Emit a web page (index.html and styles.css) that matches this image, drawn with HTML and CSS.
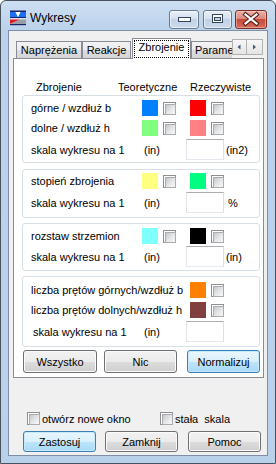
FILE: index.html
```html
<!DOCTYPE html>
<html lang="pl">
<head>
<meta charset="utf-8">
<title>Wykresy</title>
<link rel="stylesheet" href="styles.css">
</head>
<body>
<div class="window">
  <div class="titlebar">
    <svg class="appicon" viewBox="0 0 16 16" width="16" height="16">
      <path d="M0 0.5h16v1.5H0z" fill="#18236e"/>
      <path d="M0 2h5.5L8 7H0z" fill="#1c6ef2"/>
      <path d="M16 2h-5.5L8 7h8z" fill="#1c6ef2"/>
      <path d="M5.5 2h5L8 7z" fill="#ffffff"/>
      <path d="M0 7h16v1.2H0z" fill="#18236e"/>
      <path d="M0 8.2h16v1.3H0z" fill="#e8eef6"/>
      <path d="M0 9.5h10L0 14z" fill="#e41a1a"/>
      <path d="M10 9.5h6v4.5H0z" fill="#9a9ea6"/>
      <path d="M0 14h16v1.2H0z" fill="#18236e"/>
    </svg>
    <span class="title">Wykresy</span>
    <div class="tbtns">
      <span class="tbtn min"><svg width="28" height="17" viewBox="0 0 28 17"><rect x="8.5" y="6.5" width="12" height="4" fill="#fff" stroke="#364659"/></svg></span>
      <span class="tbtn max"><svg width="27" height="17" viewBox="0 0 27 17"><rect x="8.5" y="3.5" width="10" height="8" fill="#fff" stroke="#364659"/><rect x="10.5" y="6.5" width="6" height="3" fill="#c9d6e6" stroke="#364659"/></svg></span>
      <span class="tbtn close"><svg width="30" height="17" viewBox="0 0 30 17"><path d="M9.5 3.5L20.5 12.5M20.5 3.5L9.5 12.5" stroke="#5a1d18" stroke-width="4.2" stroke-linecap="square"/><path d="M9.5 3.5L20.5 12.5M20.5 3.5L9.5 12.5" stroke="#ffffff" stroke-width="2.2" stroke-linecap="square"/></svg></span>
    </div>
  </div>

  <div class="client">
    <div class="tabctl">
      <div class="tabrow">
        <div class="strip">
          <div class="tab t1">Naprężenia</div>
          <div class="tab t2">Reakcje</div>
          <div class="tab sel"><span class="focus">Zbrojenie</span></div>
          <div class="tab t4">Parametry</div>
        </div>
        <div class="spin">
          <span class="sb sbl"><svg width="13" height="14" viewBox="0 0 13 14"><path d="M7.5 4.5L4.5 7L7.5 9.5z" fill="#41597f"/></svg></span>
          <span class="sb sbr"><svg width="14" height="14" viewBox="0 0 14 14"><path d="M6 4.5L9 7L6 9.5z" fill="#41597f"/></svg></span>
        </div>
      </div>

      <div class="pane">
        <div class="hdr">
          <span class="h1">Zbrojenie</span>
          <span class="h2">Teoretyczne</span>
          <span class="h3">Rzeczywiste</span>
        </div>

        <div class="group g1">
          <div class="row">
            <span class="lbl">górne / wzdłuż b</span>
            <i class="sw c-blue"></i><i class="cb gap"></i>
            <i class="sw c-red"></i><i class="cb"></i>
          </div>
          <div class="row">
            <span class="lbl">dolne / wzdłuż h</span>
            <i class="sw c-green"></i><i class="cb gap"></i>
            <i class="sw c-pink"></i><i class="cb"></i>
          </div>
          <div class="srow mt1">
            <span class="lbl2">skala wykresu na 1</span>
            <span class="inl">(in)</span>
            <span class="inp"></span>
            <span class="u">(in2)</span>
          </div>
        </div>

        <div class="group g2">
          <div class="row">
            <span class="lbl">stopień zbrojenia</span>
            <i class="sw c-yellow"></i><i class="cb gap"></i>
            <i class="sw c-mint"></i><i class="cb"></i>
          </div>
          <div class="srow mt1">
            <span class="lbl2">skala wykresu na 1</span>
            <span class="inl">(in)</span>
            <span class="inp"></span>
            <span class="u u-pct">%</span>
          </div>
        </div>

        <div class="group g3">
          <div class="row">
            <span class="lbl">rozstaw strzemion</span>
            <i class="sw c-cyan"></i><i class="cb gap"></i>
            <i class="sw c-black"></i><i class="cb"></i>
          </div>
          <div class="srow">
            <span class="lbl2">skala wykresu na 1</span>
            <span class="inl">(in)</span>
            <span class="inp"></span>
            <span class="u">(in)</span>
          </div>
        </div>

        <div class="group g4">
          <div class="row">
            <span class="lbl wide">liczba prętów górnych/wzdłuż b</span>
            <i class="sw c-orange"></i><i class="cb"></i>
          </div>
          <div class="row">
            <span class="lbl wide">liczba prętów dolnych/wzdłuż h</span>
            <i class="sw c-brown"></i><i class="cb"></i>
          </div>
          <div class="srow mt1 ind">
            <span class="lbl2 narrow">skala wykresu na 1</span>
            <span class="inl">(in)</span>
            <span class="inp"></span>
          </div>
        </div>

        <div class="pbtns">
          <span class="btn b74">Wszystko</span>
          <span class="btn b73 ml7">Nic</span>
          <span class="btn b73 ml10 def">Normalizuj</span>
        </div>
      </div>
    </div>

    <div class="opts">
      <label class="opt opt1"><i class="cb"></i><span>otwórz nowe okno</span></label>
      <label class="opt"><i class="cb"></i><span>stała&nbsp; skala</span></label>
    </div>

    <div class="bbtns">
      <span class="btn b73 def">Zastosuj</span>
      <span class="btn b73 ml9">Zamknij</span>
      <span class="btn b73 ml10">Pomoc</span>
    </div>
  </div>
</div>
</body>
</html>
```
FILE: styles.css
```css
* { box-sizing: border-box; }
html, body { margin: 0; padding: 0; background: #ffffff; }
body {
  font-family: "Liberation Sans", Arial, sans-serif;
  font-size: 11px;
  color: #000;
}
i { font-style: normal; }

.window {
  width: 276px;
  height: 464px;
  border: 1px solid #48525e;
  border-radius: 6px 6px 0 0;
  background: linear-gradient(#cddff2, #bad2eb 30px, #b9d1ea);
  display: flex;
  flex-direction: column;
}

/* title bar */
.titlebar {
  height: 29px;
  flex: none;
  display: flex;
  align-items: flex-start;
  padding: 9px 8px 0 9px;
}
.appicon { flex: none; display: block; }
.title {
  margin-left: 4px;
  font-size: 12px;
  line-height: 16px;
  color: #000;
}
.tbtns { margin-left: auto; display: flex; }
.tbtn {
  height: 19px;
  border: 1px solid #6b7a8e;
  border-radius: 3px;
  background: linear-gradient(#e9f0f8, #d5e1ef 45%, #c2d2e6 50%, #cbdaec);
  box-shadow: inset 0 0 0 1px rgba(255,255,255,0.55);
  display: flex;
}
.tbtn svg { display: block; }
.min { width: 30px; }
.max { width: 29px; margin-left: 4px; }
.close {
  width: 32px;
  margin-left: 3px;
  border-color: #7a2c24;
  background: linear-gradient(#eab0a7, #dc8a7d 45%, #c84a3b 50%, #d36d5a);
  box-shadow: inset 0 0 0 1px rgba(255,220,210,0.45);
}

/* client area */
.client {
  flex: 1;
  margin: 0 7px 7px;
  border: 1px solid #7d8ea5;
  background: #f0f0f0;
  display: flex;
  flex-direction: column;
}

.tabctl { margin: 7px 3px 0 4px; }
.tabrow {
  display: flex;
  height: 21px;
  margin-bottom: -1px;
  position: relative;
  z-index: 1;
}
.strip {
  width: 219px;
  flex: none;
  display: flex;
  align-items: flex-end;
  padding-left: 3px;
  overflow: hidden;
}
.tab {
  flex: none;
  height: 17px;
  margin-bottom: 1px;
  border: 1px solid #898c95;
  border-bottom: none;
  background: linear-gradient(#f3f3f3, #ebebeb 50%, #dedede 50%, #d4d4d4);
  text-align: center;
  line-height: 16px;
  white-space: nowrap;
}
.t1 { width: 66px; }
.t2 { width: 49px; }
.sel {
  width: 59px;
  height: 21px;
  margin-bottom: 0;
  margin-left: 1px;
  background: #ffffff;
  padding: 1px 1px 0;
}
.focus {
  display: block;
  height: 18px;
  border: 1px dotted #000;
  line-height: 12px;
}
.t4 { width: 60px; text-align: left; padding-left: 3px; }

.spin {
  display: flex;
  margin-top: 1px;
  height: 16px;
}
.sb {
  height: 16px;
  border: 1px solid #b2b2b2;
  background: linear-gradient(#f7f7f7, #e4e4e4);
  display: flex;
}
.sb svg { display: block; }
.sbl { width: 15px; }
.sbr { width: 16px; border-left: none; }

.pane {
  border: 1px solid #898c95;
  background: #ffffff;
  padding-bottom: 4px;
}

.hdr {
  display: flex;
  margin-top: 20px;
  height: 16px;
  line-height: 16px;
  padding-left: 22px;
}
.h1 { width: 82px; }
.h2 { width: 72px; }

.group {
  margin: 0 3px 0 8px;
  border: 1px solid #d5dfe5;
  border-radius: 3px;
}
.g1 { padding: 2px 0 2px; }
.g2 { margin-top: 6px; padding: 1px 0 4px; }
.g3 { margin-top: 5px; padding: 2px 0 3px; }
.g4 { margin-top: 5px; padding: 3px 0 4px; }

.row {
  display: flex;
  align-items: center;
  height: 20px;
  padding-left: 8px;
  white-space: nowrap;
}
.lbl { width: 111px; flex: none; }
.lbl.wide { width: 159px; }

.sw { width: 16px; height: 16px; flex: none; margin-right: 5px; }
.c-blue { background: #0080ff; }
.c-red { background: #ff0000; }
.c-green { background: #80ff80; }
.c-pink { background: #ff8080; }
.c-yellow { background: #ffff80; }
.c-mint { background: #00ff80; }
.c-cyan { background: #80ffff; }
.c-black { background: #000000; }
.c-orange { background: #ff8000; }
.c-brown { background: #804040; }

.cb {
  width: 13px;
  height: 13px;
  flex: none;
  border: 1px solid #8e8f8f;
  background: #ffffff;
  padding: 1px;
}
.cb::after {
  content: "";
  display: block;
  width: 9px;
  height: 9px;
  border: 1px solid #a9adb3;
  background: linear-gradient(135deg, #c6c9cd, #e9eaeb 60%, #f7f7f7);
}
.cb.gap { margin-right: 14px; }

.srow {
  display: flex;
  align-items: center;
  height: 21px;
  padding-left: 8px;
  white-space: nowrap;
}
.srow.mt1 { margin-top: 1px; }
.srow.ind { padding-left: 10px; }
.lbl2 { width: 113px; flex: none; }
.lbl2.narrow { width: 111px; }
.inl { width: 42px; flex: none; }
.inp {
  width: 38px;
  height: 21px;
  flex: none;
  background: #ffffff;
  border: 1px solid;
  border-color: #abadb3 #dbdfe6 #e3e9ef #e2e3ea;
}
.u { margin-left: 2px; }
.u-pct { margin-left: 4px; }

/* buttons */
.btn {
  display: flex;
  align-items: center;
  justify-content: center;
  flex: none;
  border: 1px solid #707070;
  border-radius: 3px;
  background: linear-gradient(#f2f2f2, #ebebeb 50%, #dddddd 50%, #cfcfcf);
  box-shadow: inset 0 0 0 1px #fbfbfb;
  white-space: nowrap;
}
.btn.def {
  border-color: #3c7fb1;
  background: linear-gradient(#eaf6fd, #d9f0fc 50%, #bee6fd 50%, #a7d9f5);
  box-shadow: inset 0 0 0 1px #c6e9fb;
}
.b74 { width: 74px; }
.b73 { width: 73px; }
.ml7 { margin-left: 7px; }
.ml9 { margin-left: 9px; }
.ml10 { margin-left: 10px; }

.pbtns {
  display: flex;
  margin-top: 3px;
  padding-left: 9px;
}
.pbtns .btn { height: 23px; }

.opts {
  display: flex;
  align-items: center;
  height: 13px;
  margin: 34px 0 0 18px;
}
.opt {
  display: flex;
  align-items: center;
  white-space: nowrap;
}
.opt1 { width: 133px; }
.opt .cb { margin-right: 2px; }

.bbtns {
  display: flex;
  margin-top: 6px;
  padding-left: 14px;
}
.bbtns .btn { height: 21px; }
```
